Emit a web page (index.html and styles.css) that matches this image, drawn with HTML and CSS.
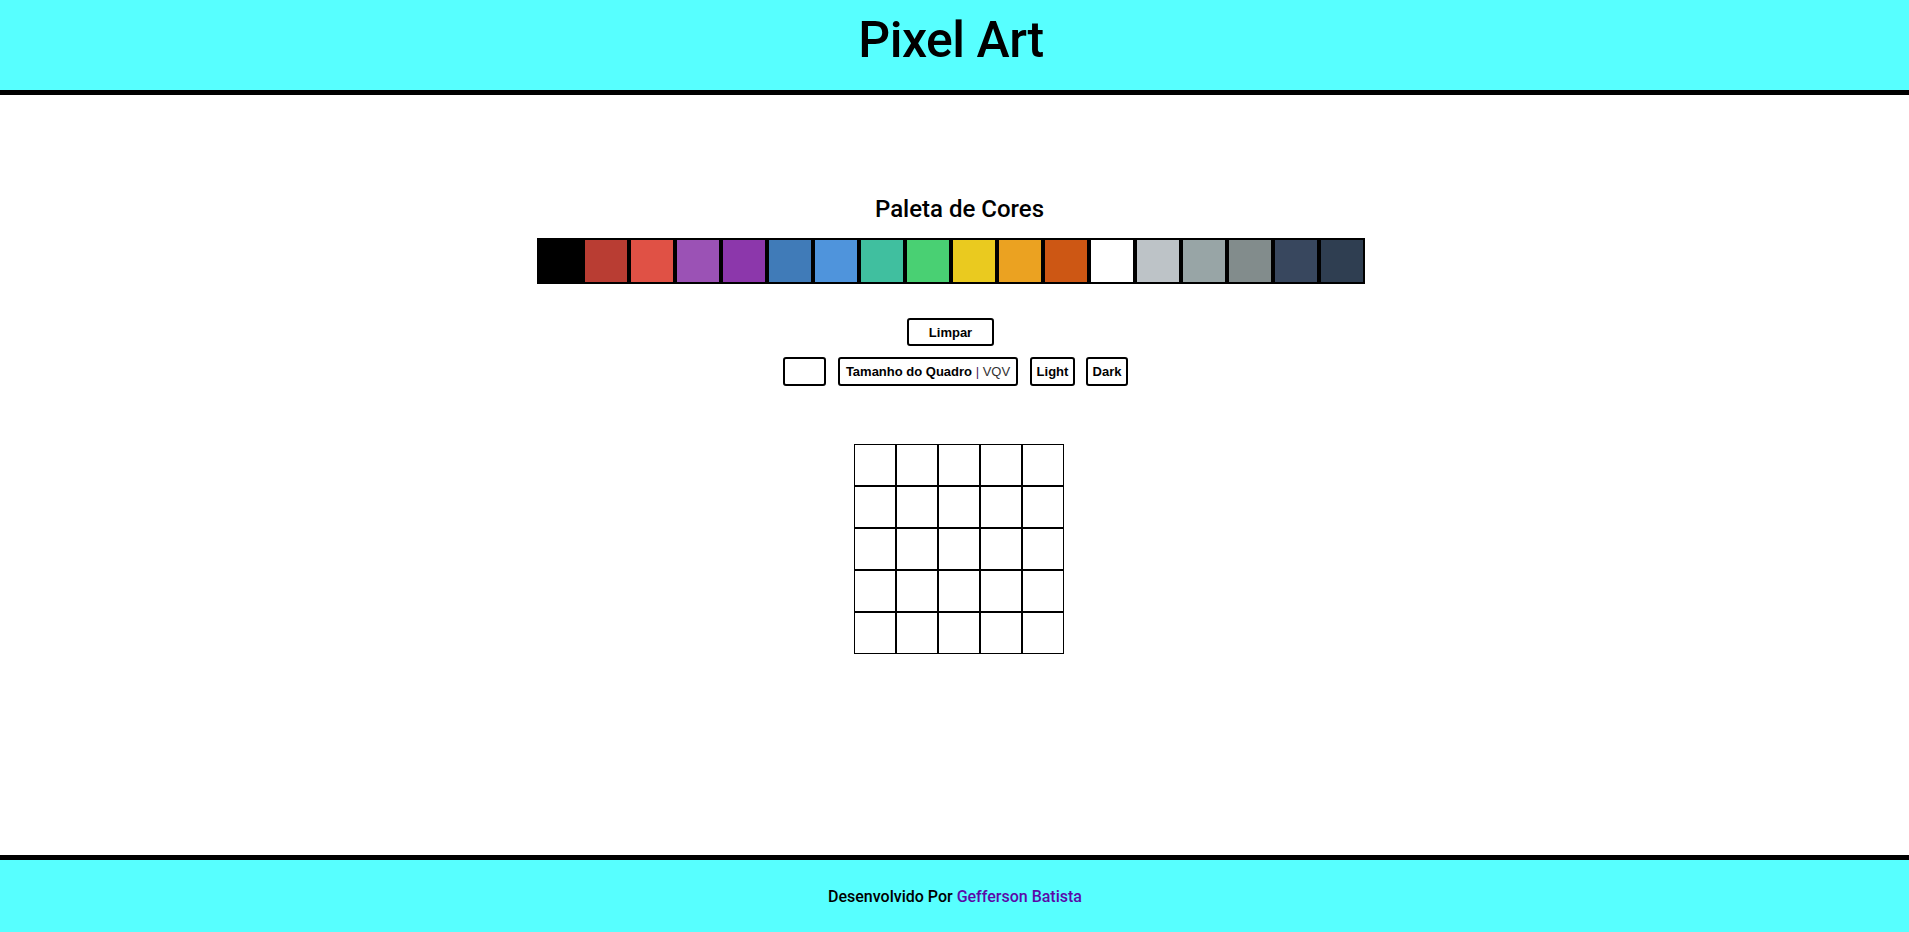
FILE: index.html
```html
<!DOCTYPE html>
<html lang="pt-BR">
<head>
<meta charset="utf-8">
<title>Pixel Art</title>
<link rel="stylesheet" href="styles.css">
</head>
<body>
<header class="topbar">
  <h1 class="title">Pixel Art</h1>
</header>
<main class="content">
  <h2 class="palette-title">Paleta de Cores</h2>
  <div class="palette">
    <div class="swatch" style="background:#000000"></div>
    <div class="swatch" style="background:#b93d33"></div>
    <div class="swatch" style="background:#e05145"></div>
    <div class="swatch" style="background:#9b52b5"></div>
    <div class="swatch" style="background:#8c37ab"></div>
    <div class="swatch" style="background:#407bb8"></div>
    <div class="swatch" style="background:#4f94dc"></div>
    <div class="swatch" style="background:#40bf9f"></div>
    <div class="swatch" style="background:#49d073"></div>
    <div class="swatch" style="background:#eaca1f"></div>
    <div class="swatch" style="background:#eba221"></div>
    <div class="swatch" style="background:#cd5714"></div>
    <div class="swatch" style="background:#ffffff"></div>
    <div class="swatch" style="background:#bdc3c7"></div>
    <div class="swatch" style="background:#98a5a6"></div>
    <div class="swatch" style="background:#828c8c"></div>
    <div class="swatch" style="background:#38475e"></div>
    <div class="swatch" style="background:#2f3e51"></div>
  </div>
  <div class="clear-row">
    <button class="btn btn-clear">Limpar</button>
  </div>
  <div class="controls">
    <input class="size-input" type="text">
    <button class="btn btn-size">Tamanho do Quadro <span class="sep">|</span> <span class="vqv">VQV</span></button>
    <button class="btn btn-light">Light</button>
    <button class="btn btn-dark">Dark</button>
  </div>
  <div class="board">
    <div class="pixel"></div><div class="pixel"></div><div class="pixel"></div><div class="pixel"></div><div class="pixel"></div>
    <div class="pixel"></div><div class="pixel"></div><div class="pixel"></div><div class="pixel"></div><div class="pixel"></div>
    <div class="pixel"></div><div class="pixel"></div><div class="pixel"></div><div class="pixel"></div><div class="pixel"></div>
    <div class="pixel"></div><div class="pixel"></div><div class="pixel"></div><div class="pixel"></div><div class="pixel"></div>
    <div class="pixel"></div><div class="pixel"></div><div class="pixel"></div><div class="pixel"></div><div class="pixel"></div>
  </div>
</main>
<footer class="footer">
  <p class="credit">Desenvolvido Por <a class="author" href="#">Gefferson Batista</a></p>
</footer>
</body>
</html>
```

FILE: styles.css
```css
* { box-sizing: border-box; }

html, body {
  margin: 0;
  padding: 0;
}

body {
  font-family: Roboto, "Liberation Sans", Arial, sans-serif;
  background: #ffffff;
  color: #000000;
  min-height: 100vh;
  display: flex;
  flex-direction: column;
}

.topbar {
  background: #57ffff;
  height: 95px;
  border-bottom: 5px solid #000000;
  padding-top: 14px;
  text-align: center;
}

.title {
  margin: 0 7px 0 0;
  font-size: 50px;
  line-height: 52px;
  font-weight: 500;
  letter-spacing: -0.5px;
}

.content {
  flex: 1;
  display: flex;
  flex-direction: column;
  align-items: center;
}

.palette-title {
  margin: 100px 0 0 10px;
  font-size: 24px;
  line-height: 28px;
  font-weight: 500;
}

.palette {
  margin-top: 15px;
  margin-right: 7px;
  display: flex;
}

.swatch {
  width: 46px;
  height: 46px;
  border: 2px solid #000000;
}

.clear-row {
  margin-top: 34px;
  margin-right: 8px;
  display: flex;
}

.btn {
  font-family: "Liberation Sans", Arial, sans-serif;
  font-size: 13px;
  font-weight: 700;
  color: #000000;
  background: #ffffff;
  border: 2px solid #000000;
  border-radius: 3px;
  padding: 0;
  height: 29px;
}

.btn-clear {
  width: 87px;
  height: 28px;
}

.controls {
  margin-top: 11px;
  margin-left: 2px;
  display: flex;
  align-items: center;
}

.size-input {
  width: 43px;
  height: 29px;
  border: 2px solid #000000;
  border-radius: 3px;
  padding: 0;
  margin: 0 12px 0 0;
}

.btn-size {
  width: 180px;
  margin-right: 12px;
}

.sep {
  font-weight: 400;
  color: #4b1d5e;
}

.vqv {
  font-weight: 400;
  color: #333333;
}

.btn-light {
  width: 45px;
  margin-right: 11px;
}

.btn-dark {
  width: 42px;
}

.board {
  margin-top: 58px;
  margin-left: 8px;
  display: grid;
  grid-template-columns: repeat(5, 42px);
  grid-auto-rows: 42px;
}

.pixel {
  border: 1px solid #000000;
  background: #ffffff;
}

.footer {
  background: #57ffff;
  border-top: 5px solid #000000;
  height: 77px;
  display: flex;
  align-items: center;
  justify-content: center;
}

.credit {
  margin: 0 0 0 1px;
  font-size: 16px;
  font-weight: 500;
}

.author {
  color: #5b0aa8;
  text-decoration: none;
}
```
